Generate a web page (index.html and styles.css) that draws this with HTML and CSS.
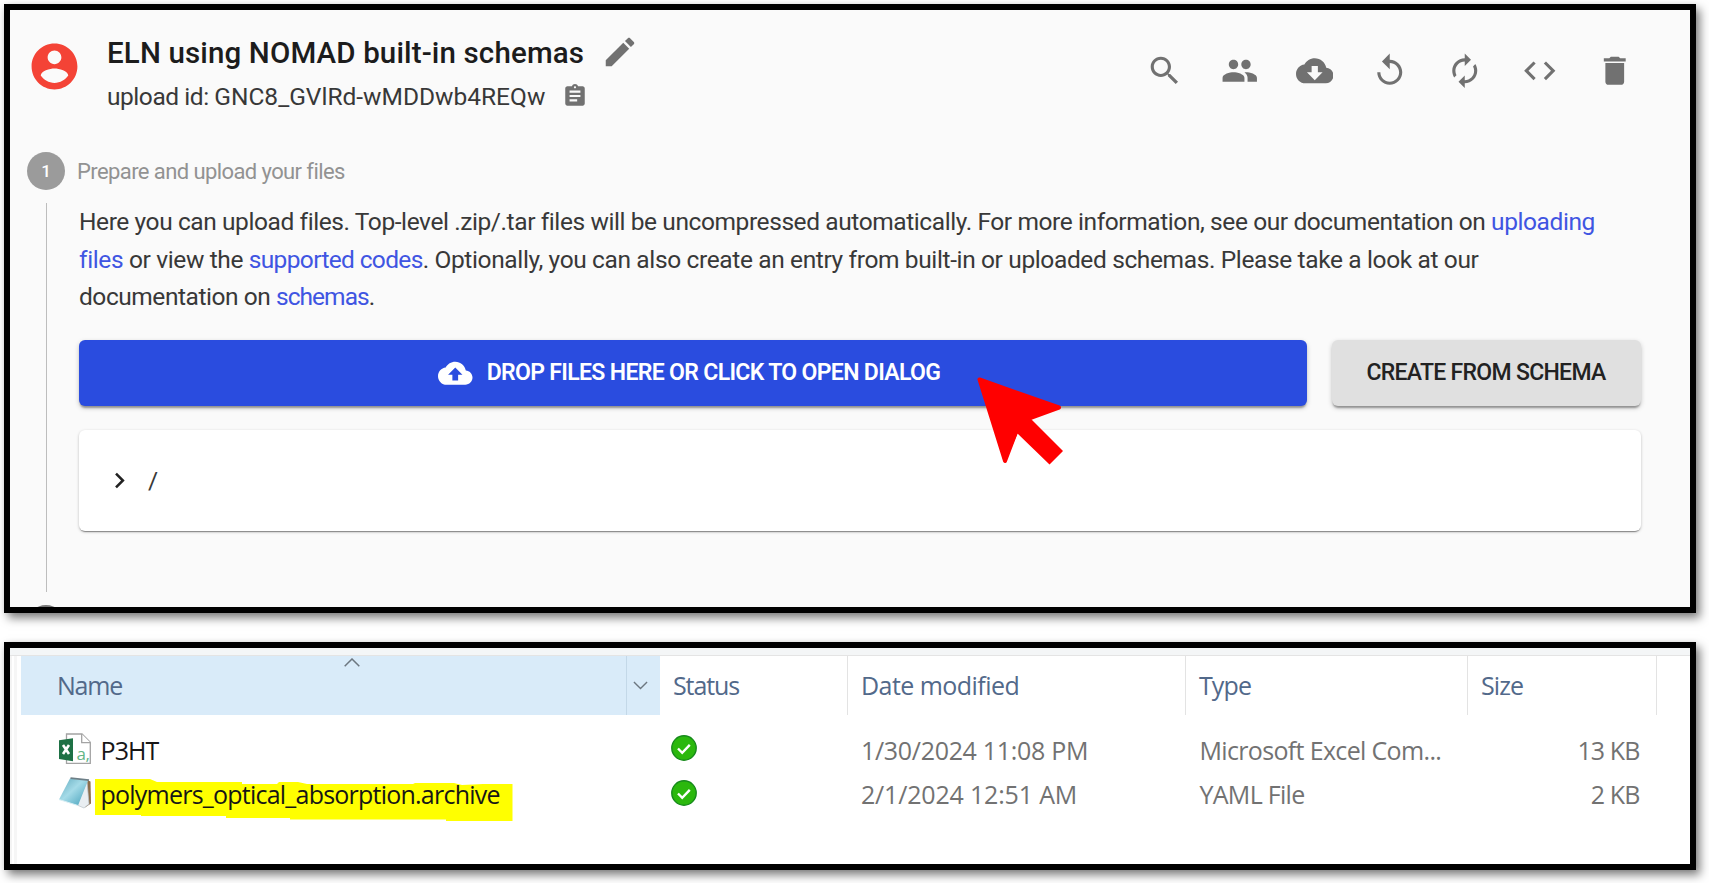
FILE: index.html
```
<!DOCTYPE html>
<html lang="en">
<head>
<meta charset="utf-8">
<title>ELN using NOMAD built-in schemas</title>
<link rel="stylesheet" href="styles.css">
</head>
<body>
<main class="page">
  <section class="panel upload">
    <header class="upload-head">
      <svg class="avatar" viewBox="0 0 24 24"><path d="M12 2C6.48 2 2 6.48 2 12s4.480 10 10 10 10-4.480 10-10S17.520 2 12 2zm0 3c1.660 0 3 1.340 3 3s-1.340 3-3 3-3-1.340-3-3 1.340-3 3-3zm0 14.200c-2.500 0-4.710-1.280-6-3.220.030-1.990 4-3.080 6-3.080 1.990 0 5.970 1.090 6 3.080-1.290 1.940-3.500 3.220-6 3.220z"/></svg>
      <div class="heading">
        <div class="title-row">
          <h1 class="title">ELN using NOMAD built-in schemas</h1>
          <svg class="edit" viewBox="0 0 24 24"><path d="M3 17.250V21h3.750L17.810 9.940l-3.750-3.750L3 17.250zM20.710 7.040c.390-.390.390-1.020 0-1.410l-2.340-2.340c-.390-.390-1.020-.390-1.410 0l-1.830 1.830 3.750 3.750 1.830-1.830z"/></svg>
        </div>
        <div class="id-row">
          <span class="upload-id"><span class="id-label">upload id: </span>GNC8_GVlRd-wMDDwb4REQw</span>
          <svg class="copy" viewBox="0 0 24 24"><path d="M19 3h-4.180C14.400 1.840 13.300 1 12 1c-1.300 0-2.400.840-2.820 2H5c-1.100 0-2 .900-2 2v14c0 1.100.900 2 2 2h14c1.100 0 2-.900 2-2V5c0-1.100-.900-2-2-2zm-7 0c.550 0 1 .450 1 1s-.450 1-1 1-1-.450-1-1 .450-1 1-1zm2 14H7v-2h7v2zm3-4H7v-2h10v2zm0-4H7V7h10v2z"/></svg>
        </div>
      </div>
      <nav class="actions">
        <svg viewBox="0 0 24 24"><path d="M15.500 14h-.790l-.280-.270C15.410 12.590 16 11.110 16 9.500 16 5.910 13.090 3 9.500 3S3 5.910 3 9.500 5.910 16 9.500 16c1.610 0 3.090-.590 4.230-1.570l.270.280v.790l5 4.990L20.490 19l-4.990-5zm-6 0C7.010 14 5 11.990 5 9.500S7.010 5 9.500 5 14 7.010 14 9.500 11.990 14 9.500 14z"/></svg>
        <svg viewBox="0 0 24 24"><path d="M16 11c1.660 0 2.990-1.340 2.990-3S17.660 5 16 5c-1.660 0-3 1.340-3 3s1.340 3 3 3zm-8 0c1.660 0 2.990-1.340 2.990-3S9.660 5 8 5C6.340 5 5 6.340 5 8s1.340 3 3 3zm0 2c-2.330 0-7 1.170-7 3.500V19h14v-2.500c0-2.330-4.670-3.500-7-3.500zm8 0c-.290 0-.620.020-.970.050 1.160.840 1.970 1.970 1.970 3.450V19h6v-2.500c0-2.330-4.670-3.500-7-3.500z"/></svg>
        <svg viewBox="0 0 24 24"><path d="M19.350 10.040C18.670 6.590 15.640 4 12 4 9.110 4 6.600 5.640 5.350 8.040 2.340 8.360 0 10.910 0 14c0 3.310 2.690 6 6 6h13c2.760 0 5-2.240 5-5 0-2.640-2.050-4.780-4.650-4.960zM17 13l-5 5-5-5h3V9h4v4h3z"/></svg>
        <svg viewBox="0 0 24 24"><path d="M12 5V1L7 6l5 5V7c3.310 0 6 2.690 6 6s-2.690 6-6 6-6-2.690-6-6H4c0 4.420 3.580 8 8 8s8-3.580 8-8-3.580-8-8-8z"/></svg>
        <svg viewBox="0 0 24 24"><path d="M12 6v3l4-4-4-4v3c-4.420 0-8 3.580-8 8 0 1.570.460 3.030 1.240 4.260L6.700 14.800c-.450-.830-.700-1.790-.700-2.800 0-3.310 2.690-6 6-6zm6.760 1.740L17.300 9.200c.440.840.700 1.790.700 2.800 0 3.310-2.690 6-6 6v-3l-4 4 4 4v-3c4.420 0 8-3.580 8-8 0-1.570-.460-3.030-1.240-4.260z"/></svg>
        <svg viewBox="0 0 24 24"><path d="M9.400 16.600L4.800 12l4.600-4.600L8 6l-6 6 6 6 1.400-1.400zm5.200 0l4.600-4.600-4.600-4.600L16 6l6 6-6 6-1.400-1.400z"/></svg>
        <svg viewBox="0 0 24 24"><path d="M6 19c0 1.100.900 2 2 2h8c1.100 0 2-.900 2-2V7H6v12zM19 4h-3.500l-1-1h-5l-1 1H5v2h14V4z"/></svg>
      </nav>
    </header>

    <div class="step-head">
      <span class="step-dot">1</span>
      <span class="step-label">Prepare and upload your files</span>
    </div>
    <div class="step-body">
      <p class="intro">
        <span class="line l1">Here you can upload files. Top-level .zip/.tar files will be uncompressed automatically. For more information, see our documentation on <a>uploading</a></span>
        <span class="line l2"><a>files</a> or view the <a class="codes">supported codes</a>. Optionally, you can also create an entry from built-in or uploaded schemas. Please take a look at our</span>
        <span class="line l3">documentation on <a>schemas</a>.</span>
      </p>
      <div class="buttons">
        <div class="btn drop">
          <svg class="cloud" viewBox="0 0 24 24"><path d="M19.350 10.040C18.670 6.590 15.640 4 12 4 9.110 4 6.600 5.640 5.350 8.040 2.340 8.360 0 10.910 0 14c0 3.310 2.690 6 6 6h13c2.760 0 5-2.240 5-5 0-2.640-2.050-4.780-4.650-4.960zM14 13v4h-4v-4H7l5-5 5 5h-3z"/></svg>
          <span>DROP FILES HERE OR CLICK TO OPEN DIALOG</span>
          <svg class="pointer" viewBox="0 0 90 92"><path d="M4 4L84 32L55 43L87 75L73.500 88.500L41.500 57.500L29 87z"/><path class="tips" d="M3.500 3.500L83 31.500L51.500 43L41 53.500L29 85z"/></svg>
        </div>
        <div class="btn create">CREATE FROM SCHEMA</div>
      </div>
      <div class="files">
        <svg class="chevron" viewBox="0 0 24 24"><path d="M8.600 16.600L13.200 12 8.600 7.400 10 6l6 6-6 6z"/></svg>
        <span>/</span>
      </div>
    </div>
    <span class="next-dot"></span>
  </section>

  <section class="panel explorer">
    <div class="strip"></div>
    <div class="cols head">
      <div class="c-name">Name
        <svg class="sort" viewBox="0 0 16 9"><path d="M.700 8.300L8 1l7.300 7.300"/></svg>
      </div>
      <div class="c-drop"><svg viewBox="0 0 16 9"><path d="M1 .700L8 7.700l7-7"/></svg></div>
      <div class="c-status">Status</div>
      <div class="c-date"><span class="wide">Date modified</span></div>
      <div class="c-type">Type</div>
      <div class="c-size">Size</div>
      <div></div>
    </div>
    <div class="cols row">
      <div class="c-file">
        <svg class="ico" viewBox="0 0 32 32">
          <path d="M7.500 1H23l8.300 8.300v21H7.500z" fill="#fff" stroke="#a3a3a3" stroke-width="1.300"/>
          <path d="M22.700 1v8.600h8.600" fill="#fff" stroke="#a3a3a3" stroke-width="1.300"/>
          <path d="M0 7.300l14-2v23L0 26z" fill="#1e7145"/>
          <path d="M4 12l6 9M10 12l-6 9" stroke="#fff" stroke-width="2.600" fill="none"/>
          <text x="17.500" y="27" class="glyph">a,</text>
        </svg>
        <span>P3HT</span>
      </div>
      <div class="c-check"><svg viewBox="0 0 26 26"><circle cx="13" cy="13" r="12.200"/><path d="M7 13.500l4.200 4.300 7.600-8"/></svg></div>
      <div class="c-date t1">1/30/2024 11:08 PM</div>
      <div class="c-type t2">Microsoft Excel Com...</div>
      <div class="c-kb">13 KB</div>
    </div>
    <div class="cols row">
      <div class="c-file">
        <svg class="ico" viewBox="0 0 32 32">
          <defs><linearGradient id="pad" x1="0" y1="0" x2="1" y2="1"><stop offset="0" stop-color="#5fa9bd"/><stop offset=".45" stop-color="#a5dbe8"/><stop offset="1" stop-color="#3f9db8"/></linearGradient></defs>
          <path d="M28 3l3.500 1.500.500 22-6 4z" fill="#8b6d4b"/>
          <path d="M28 4l2 23-5 4-7-3z" fill="#e9eef2" stroke="#b9c3ca" stroke-width=".7"/>
          <path d="M11 1.500L29 3.500 19 28.500 0 22.500z" fill="url(#pad)"/>
          <path d="M11.500 1.200L30 3.200" stroke="#6d7f87" stroke-width="1.800"/>
          <path d="M0 22.500l19 6" stroke="#d8eef4" stroke-width="1"/>
        </svg>
        <span class="marked">polymers_optical_absorption.archive</span>
      </div>
      <div class="c-check"><svg viewBox="0 0 26 26"><circle cx="13" cy="13" r="12.200"/><path d="M7 13.500l4.200 4.300 7.600-8"/></svg></div>
      <div class="c-date t3">2/1/2024 12:51 AM</div>
      <div class="c-type t4">YAML File</div>
      <div class="c-kb">2 KB</div>
    </div>
  </section>
</main>
</body>
</html>
```
FILE: styles.css
```
* { box-sizing: border-box; }
body { margin: 0; background: #fff; overflow: hidden; }
svg { display: block; flex: none; }

.page { display: flex; flex-direction: column; gap: 29px; padding: 4px 0 0 4px; height: 883px; }
.panel {
  width: 1692px;
  border: 6px solid #000;
  box-shadow: 4px 5px 9px rgba(0, 0, 0, .5), 0 0 5px rgba(0, 0, 0, .06);
  overflow: hidden;
  position: relative;
}

/* Upload page */
.upload {
  height: 609px;
  background: #fafafa;
  font-family: Roboto, "Liberation Sans", sans-serif;
  font-size: 24.5px;
  color: #383838;
}
.upload-head { display: flex; align-items: flex-start; padding: 23px 57px 0 17px; height: 142px; }
.avatar { width: 55px; height: 55px; margin-top: 6px; fill: #f44336; }
.heading { padding-left: 25px; }
.title-row, .id-row { display: flex; white-space: nowrap; }
.title { margin: 0; font-size: 29.5px; font-weight: 500; line-height: 40px; letter-spacing: .14px; color: #1c1c1c; }
.edit { width: 38px; height: 38px; margin-left: 17px; fill: #717171; }
.id-row { margin-top: 6px; }
.upload-id { line-height: 36px; letter-spacing: 0; }
.id-label { letter-spacing: -.45px; }
.copy { width: 26px; height: 26px; margin: 4px 0 0 17px; fill: #717171; }
.actions { display: flex; gap: 37.5px; margin: 18.5px 0 0 auto; fill: #717171; }
.actions svg { width: 37.5px; height: 37.5px; }

.step-head { display: flex; align-items: center; height: 38px; padding-left: 17px; }
.step-dot {
  width: 38px; height: 38px; border-radius: 50%;
  background: #9b9b9b; color: #fff;
  font-size: 17px; font-weight: 500; line-height: 38px; text-align: center;
}
.step-label { font-size: 22px; letter-spacing: -.59px; color: #929292; padding-left: 12px; }
.step-body { margin: 13px 0 0 36px; padding: 0 49.5px 0 32px; height: 389px; border-left: 1.5px solid #bdbdbd; }
.next-dot { display: block; width: 38px; height: 38px; border-radius: 50%; background: #777; margin: 13px 0 0 17px; }

.intro { margin: 0; }
.line { display: block; white-space: nowrap; line-height: 37.5px; }
.l1 { letter-spacing: -.41px; }
.l2 { letter-spacing: -.37px; }
.codes { letter-spacing: -.65px; }
.l3 { letter-spacing: -.45px; }
.l3 a { letter-spacing: -.95px; }
.line a { color: #3f55e2; }

.buttons { display: flex; gap: 25px; margin-top: 24.5px; }
.btn {
  display: flex; align-items: center; justify-content: center;
  height: 65.5px; border-radius: 6px; font-size: 23px; white-space: nowrap;
  box-shadow: 0 3px 2px -1px rgba(0, 0, 0, .3), 0 2px 5px rgba(0, 0, 0, .22);
}
.drop { flex: 1; position: relative; background: #2a4cdf; color: #fff; font-weight: 600; letter-spacing: -.66px; padding-right: 7px; gap: 14px; }
.cloud { width: 34.5px; height: 34.5px; fill: #fff; }
.pointer { position: absolute; left: 897px; top: 36px; width: 90px; height: 92px; fill: #f00; z-index: 1; }
.tips { stroke: #f00; stroke-width: 4; stroke-linejoin: round; }
.create { width: 309px; background: #e0e0e0; color: #222; font-weight: 500; letter-spacing: -.7px; }

.files {
  display: flex; align-items: center; height: 100.5px; margin-top: 24.5px; padding-left: 25px;
  background: #fff; border-radius: 6px; gap: 13px;
  box-shadow: 0 2px 1px -1px rgba(0, 0, 0, .35), 0 1px 3px rgba(0, 0, 0, .25);
}
.chevron { width: 31px; height: 31px; fill: #222; }

/* File explorer */
.explorer {
  height: 228px;
  background: linear-gradient(90deg, #f4f4f4 0 2px, #fff 2px 4px, #f6f6f6 4px 7px, #fff 7px);
  font-family: "Open Sans", "Noto Sans", sans-serif;
  font-size: 25px;
  letter-spacing: -.9px;
  color: #727272;
  white-space: nowrap;
}
.strip { height: 8px; background: #f4f6f7; border-bottom: 1px solid #e4e4e4; }
.cols { display: grid; margin-left: 11px; }
.head { grid-template-columns: 606px 33px 188px 338px 282px 189px 1fr; height: 58px; line-height: 59px; margin-bottom: 13.5px; color: #52698a; }
.head > div { border-right: 1.5px solid #e3e3e3; }
.head > div:last-child { border: 0; }
.head .c-name { position: relative; background: #d9ebf9; border-color: #c3d8e8; padding-left: 36px; letter-spacing: -1.2px; }
.sort { position: absolute; left: 323px; top: 2px; width: 16px; height: 9px; }
.head path { fill: none; stroke: #6d7780; stroke-width: 1.5; }
.head .c-drop { background: #d9ebf9; border: 0; padding: 25px 0 0 6px; }
.c-drop svg { width: 15px; height: 9px; }
.c-status { padding-left: 13px; letter-spacing: -1.1px; }
.head .c-date, .head .c-type, .head .c-size { padding-left: 13px; }
.wide { letter-spacing: -.55px; }
.row { grid-template-columns: 639px 188px 338.5px 282.5px 170.5px; height: 44.5px; line-height: 44.5px; }
.c-file { display: flex; padding-left: 38px; color: #161616; }
.ico { width: 32px; height: 32px; margin: 5px 9.5px 0 0; }
.glyph { font: 17px "Open Sans", sans-serif; letter-spacing: -.5px; fill: #63b586; }
.marked { position: relative; z-index: 0; letter-spacing: -.77px; }
.marked::before {
  content: ""; position: absolute; z-index: -1; left: -5.5px; top: 7px; width: 417.5px; height: 43px; background: #ff0;
  clip-path: polygon(0 0, 55px 0, 62px 3px, 147px 3px, 147px 5px, 182px 5px, 184px 3px, 203px 3px, 212px 5px, 318px 5px, 320px 4px, 359px 4px, 367px 6px, 388px 5px, 417.5px 5px, 417.5px 42px, 351px 42px, 351px 40.5px, 195px 40.5px, 195px 39px, 131px 39px, 131px 37px, 46px 37px, 46px 36px, 0 36px);
}
.c-check { padding: 7.5px 0 0 10.5px; }
.c-check svg { width: 26px; height: 26px; }
.c-check circle { fill: #2bb80d; stroke: #178a1c; stroke-width: 1.4; }
.c-check path { fill: none; stroke: #fff; stroke-width: 2.4; }
.row .c-date, .row .c-type { padding-left: 13px; }
.t1 { letter-spacing: -.31px; }
.t2 { letter-spacing: -.66px; }
.t3 { letter-spacing: -.18px; }
.t4 { letter-spacing: -.71px; }
.c-kb { text-align: right; }
```
